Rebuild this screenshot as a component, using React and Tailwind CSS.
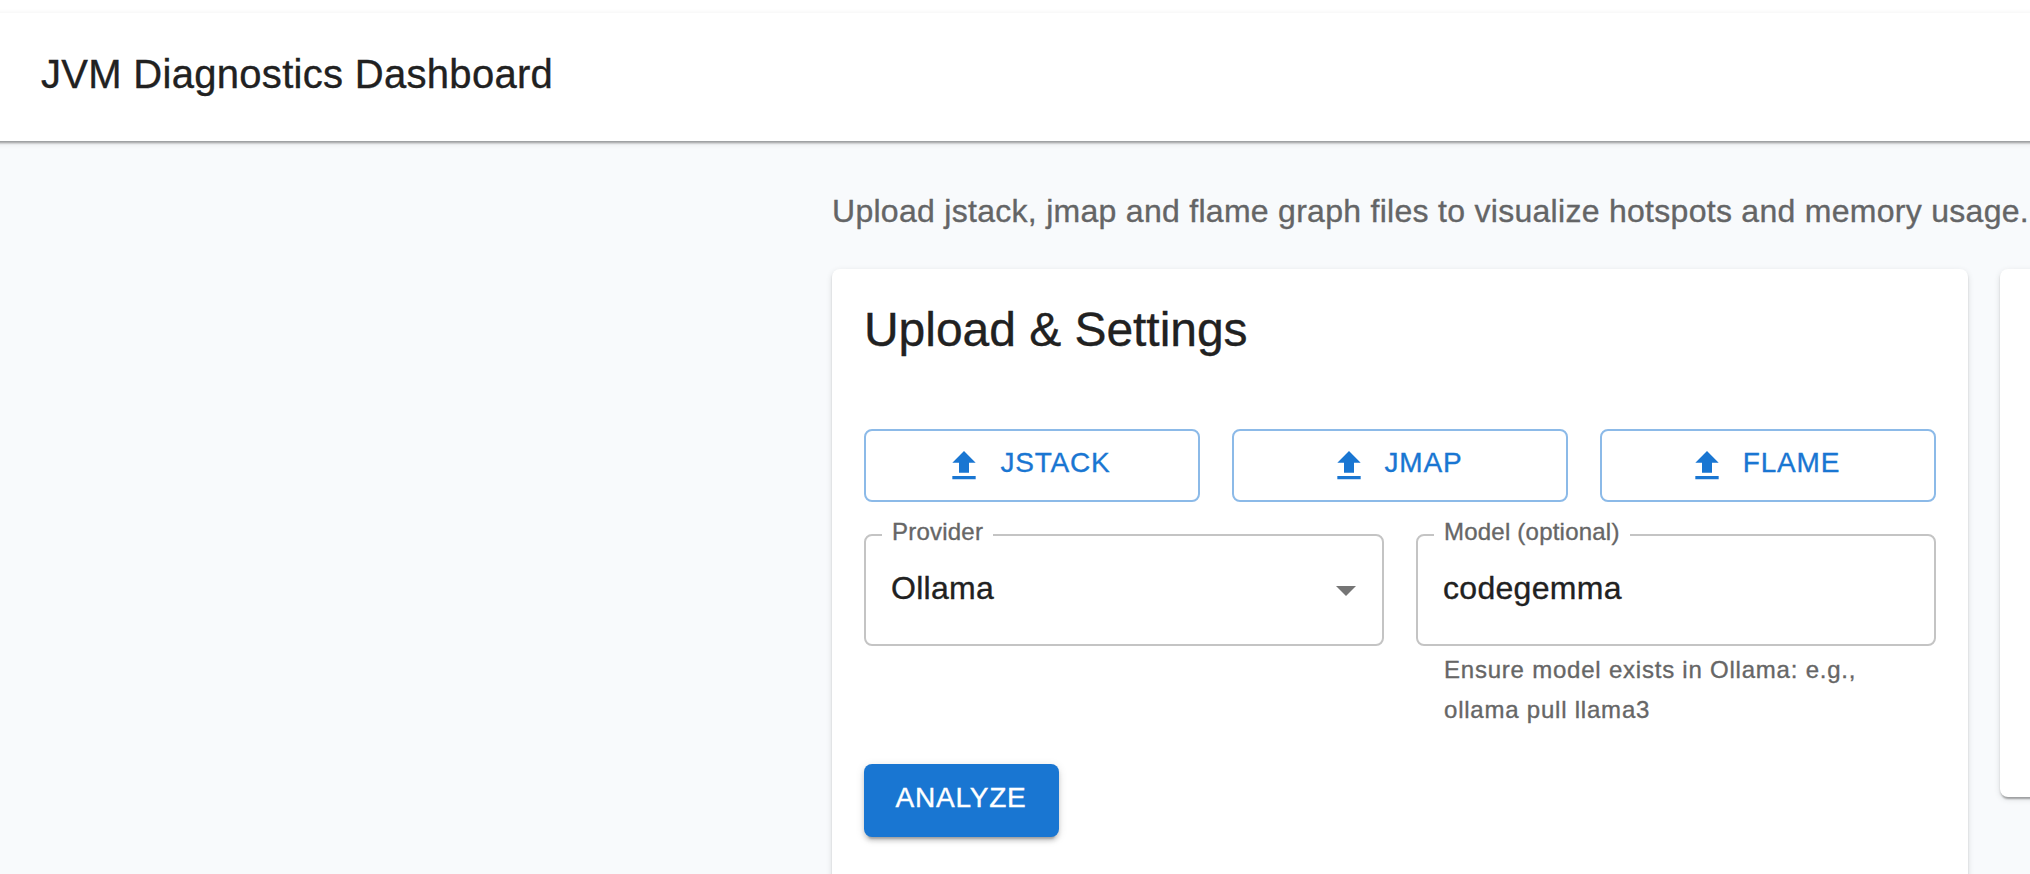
const PAPER_SHADOW = "shadow-[0_4px_2px_-2px_rgba(0,0,0,0.2),0_2px_2px_0_rgba(0,0,0,0.14),0_2px_6px_0_rgba(0,0,0,0.12)]";

function UploadIcon() {
  return (
    <svg viewBox="0 0 24 24" className="-ml-2 mr-4 size-10 shrink-0 fill-current">
      <path d="M5 20h14v-2H5zm0-10h4v6h6v-6h4l-7-7z" />
    </svg>
  );
}

function UploadButton({ label }) {
  return (
    <button className="flex h-[73px] flex-1 items-center justify-center rounded-lg border-2 border-[#8cbae8] pr-px text-[#1976d2]">
      <UploadIcon />
      <span className="pb-1.5 text-[28px] leading-[49px] tracking-[0.8px]">{label}</span>
    </button>
  );
}

function Field({ label, legendWidth, value, helper, select }) {
  return (
    <div className="w-[520px]">
      <fieldset className="h-[122px] rounded-lg border-2 border-[#c4c4c4] px-4">
        <legend className={`h-[22px] pl-[10px] text-2xl leading-[16px] tracking-[0.22px] whitespace-nowrap text-[#666] ${legendWidth}`}>
          {label}
        </legend>
        <div className="flex h-[83px] items-center justify-between pl-[9px]">
          <span className="text-[32px] leading-[46px] tracking-[0.3px] text-[#212121]">{value}</span>
          {select && (
            <svg viewBox="0 0 24 24" className="-mr-1 mt-1 size-12 fill-[#757575]">
              <path d="m7 10 5 5 5-5z" />
            </svg>
          )}
        </div>
      </fieldset>
      {helper && (
        <p className="mx-7 mt-1 text-2xl leading-[40px] tracking-[0.78px] text-[#666]">{helper}</p>
      )}
    </div>
  );
}

export default function App() {
  return (
    <div className="h-[874px] w-full overflow-hidden bg-[#f8fafc] font-['Liberation_Sans',Arial,sans-serif] text-[#212121] [-webkit-text-stroke:0.35px_currentColor]">
      <div className="h-[13px] bg-white" />
      <header className={`relative -mx-3 flex h-32 items-center bg-white px-[53px] ${PAPER_SHADOW}`}>
        <h1 className="pb-1.5 text-[40px] leading-[64px] tracking-[0.3px] whitespace-nowrap">JVM Diagnostics Dashboard</h1>
      </header>
      <main className="ml-[832px] w-[2304px] pt-[46px]">
        <p className="text-[32px] leading-[48px] tracking-[0.285px] text-[#646566]">
          Upload jstack, jmap and flame graph files to visualize hotspots and memory usage.
        </p>
        <div className="mt-[34px] flex items-start gap-8">
          <section className={`h-[700px] w-[1136px] rounded-lg bg-white px-8 pt-[29px] ${PAPER_SHADOW}`}>
            <h2 className="text-[48px] leading-[64px] tracking-[-0.04px]">Upload &amp; Settings</h2>
            <div className="mt-[67px] flex gap-8">
              <UploadButton label="JSTACK" />
              <UploadButton label="JMAP" />
              <UploadButton label="FLAME" />
            </div>
            <div className="mt-[22px] flex gap-8">
              <Field label="Provider" legendWidth="w-[111px]" value="Ollama" select />
              <Field
                label="Model (optional)"
                legendWidth="w-[196px]"
                value="codegemma"
                helper="Ensure model exists in Ollama: e.g., ollama pull llama3"
              />
            </div>
            <button className="mt-[34px] flex h-[73px] w-[195px] items-center justify-center rounded-lg bg-[#1976d2] pr-px text-white shadow-[0_6px_2px_-4px_rgba(0,0,0,0.2),0_4px_4px_0_rgba(0,0,0,0.14),0_2px_10px_0_rgba(0,0,0,0.12)]">
              <span className="pb-1.5 text-[28px] leading-[49px] tracking-[0.8px]">ANALYZE</span>
            </button>
          </section>
          <section className={`h-[528px] w-[1136px] rounded-lg bg-white ${PAPER_SHADOW}`} />
        </div>
      </main>
    </div>
  );
}
